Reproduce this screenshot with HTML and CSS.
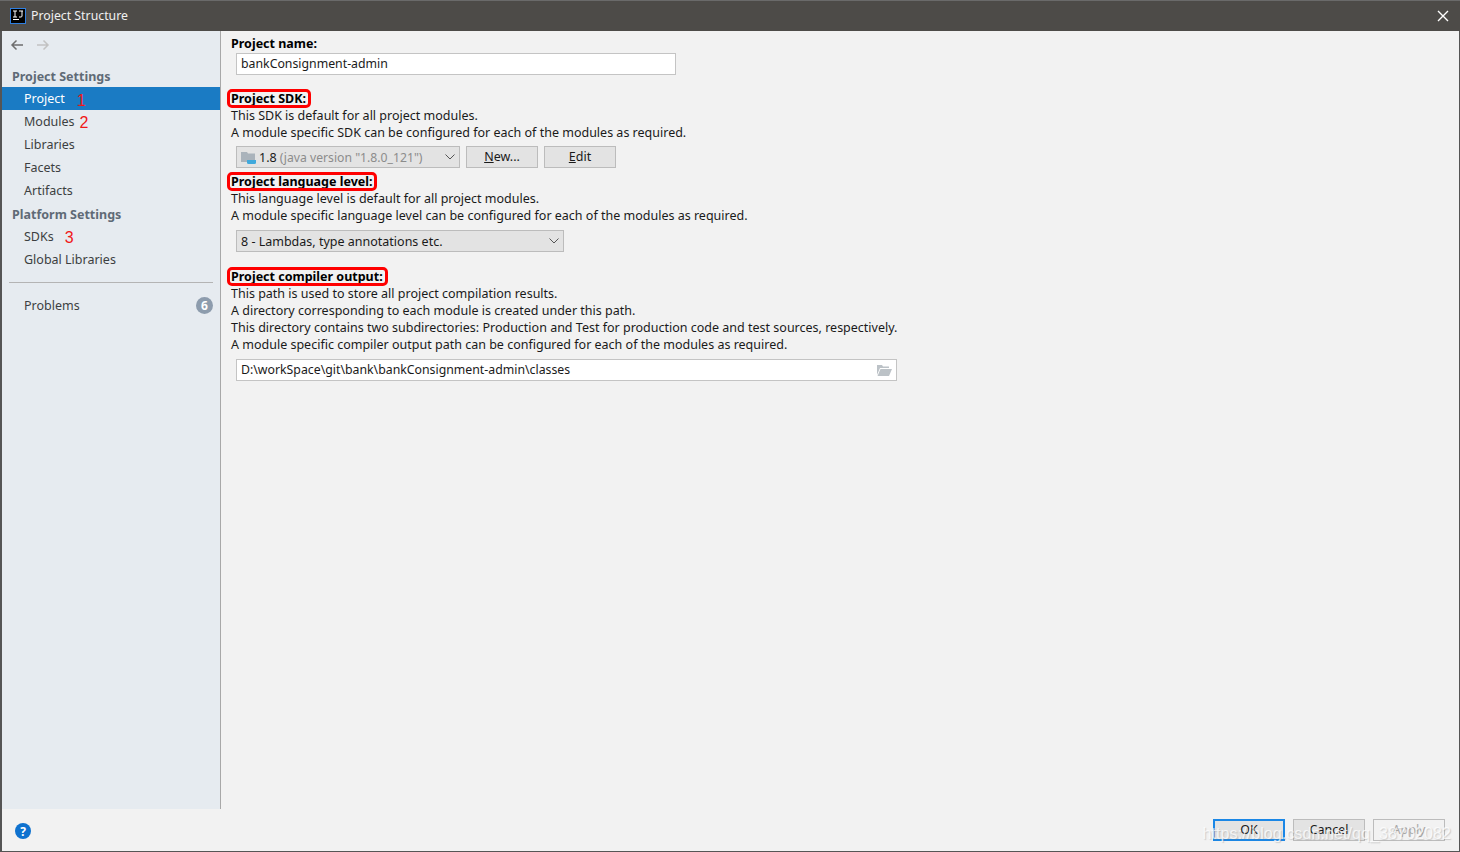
FILE: index.html
```html
<!DOCTYPE html>
<html lang="en">
<head>
<meta charset="utf-8">
<title>Project Structure</title>
<link rel="stylesheet" href="styles.css">
</head>
<body>
<div class="window">
  <header class="titlebar">
    <svg class="app-icon" width="16" height="16" viewBox="0 0 16 16"><rect x="0.5" y="0.5" width="15" height="15" fill="#000" stroke="#2f7fe0"/><rect x="3" y="11" width="6" height="1" fill="#fff"/><path d="M3 3h4M5 3v6M3 9h4M9 3h4M12 3v5q0 1-1 1H9" fill="none" stroke="#fff" stroke-width="1"/></svg>
    <span class="title">Project Structure</span>
    <svg class="close" width="12" height="12" viewBox="0 0 12 12"><path d="M1 1l10 10M11 1L1 11" stroke="#fff" stroke-width="1.4"/></svg>
  </header>
  <div class="body">
    <aside class="sidebar">
      <div class="nav-arrows">
        <svg width="14" height="12" viewBox="0 0 14 12"><path d="M13 6H2M6.500 1.500L2 6l4.500 4.500" fill="none" stroke="#6e6e6e" stroke-width="1.500"/></svg>
        <svg width="14" height="12" viewBox="0 0 14 12"><path d="M1 6h11M7.500 1.500L12 6l-4.500 4.500" fill="none" stroke="#c2c2c2" stroke-width="1.500"/></svg>
      </div>
      <div class="group first">Project Settings</div>
      <div class="item selected">Project<span class="mark m1">1</span></div>
      <div class="item">Modules<span class="mark m2">2</span></div>
      <div class="item">Libraries</div>
      <div class="item">Facets</div>
      <div class="item">Artifacts</div>
      <div class="group">Platform Settings</div>
      <div class="item">SDKs<span class="mark m3">3</span></div>
      <div class="item">Global Libraries</div>
      <div class="divider"></div>
      <div class="item problems">Problems<span class="badge">6</span></div>
    </aside>
    <main class="content">
      <div class="line"><b>Project name:</b></div>
      <div class="field name-field">bankConsignment-admin</div>

      <div class="line section-sdk"><b class="flag">Project SDK:</b></div>
      <div class="line">This SDK is default for all project modules.</div>
      <div class="line">A module specific SDK can be configured for each of the modules as required.</div>
      <div class="controls">
        <div class="combo sdk-combo">
          <svg class="sdk-icon" width="16" height="15" viewBox="0 0 16 15"><path d="M0 2h6l1 1.500h7V12H0z" fill="#aab3bb"/><path d="M6 10h9v2.500q0 1.500-1.500 1.500h-6Q6 14 6 12.500z" fill="#40a9dc"/></svg>
          <span>1.8</span><span class="muted">(java version "1.8.0_121")</span>
          <svg class="chev" width="10" height="6" viewBox="0 0 10 6"><path d="M0.500 0.500L5 5l4.500-4.500" fill="none" stroke="#555"/></svg>
        </div>
        <div class="btn new-btn"><u>N</u>ew...</div>
        <div class="btn new-btn"><u>E</u>dit</div>
      </div>

      <div class="line section-lang"><b class="flag">Project language level:</b></div>
      <div class="line">This language level is default for all project modules.</div>
      <div class="line">A module specific language level can be configured for each of the modules as required.</div>
      <div class="combo lang-combo">
        <span>8 - Lambdas, type annotations etc.</span>
        <svg class="chev" width="10" height="6" viewBox="0 0 10 6"><path d="M0.500 0.500L5 5l4.500-4.500" fill="none" stroke="#555"/></svg>
      </div>

      <div class="line section-out"><b class="flag">Project compiler output:</b></div>
      <div class="line">This path is used to store all project compilation results.</div>
      <div class="line">A directory corresponding to each module is created under this path.</div>
      <div class="line">This directory contains two subdirectories: Production and Test for production code and test sources, respectively.</div>
      <div class="line">A module specific compiler output path can be configured for each of the modules as required.</div>
      <div class="field path-field">
        <span>D:\workSpace\git\bank\bankConsignment-admin\classes</span>
        <svg class="folder" width="15" height="11" viewBox="0 0 15 11"><path d="M0 0h5l1 1.500h6V3H3L0 10z" fill="#bcc2c7"/><path d="M3.500 4H15l-3 7H0.500z" fill="#bcc2c7"/></svg>
      </div>
    </main>
  </div>
  <footer class="footer">
    <span class="help">?</span>
    <div class="actions">
      <div class="btn action default">OK</div>
      <div class="btn action">Cancel</div>
      <div class="btn action disabled">Apply</div>
    </div>
    <span class="watermark">https://blog.csdn.net/qq_38702082</span>
  </footer>
</div>
</body>
</html>
```
FILE: styles.css
```css
* { box-sizing: border-box; }
html, body { margin: 0; height: 100%; background: #fff; }
body { font-family: "Noto Sans", sans-serif; font-size: 12.5px; color: #1a1a1a; overflow: hidden; }

.window {
  width: 1460px; height: 852px;
  display: flex; flex-direction: column;
  border-left: 2px solid #555;
  border-right: 1px solid #555;
  border-bottom: 1px solid #555;
  background: #f2f2f2;
  position: relative;
}

.titlebar {
  height: 31px; margin-left: -2px; margin-right: -1px;
  background: #4d4b48;
  display: flex; align-items: center;
  padding: 0 11px 0 10px;
  border-top: 1px solid #6a6a6a;
  color: #f0f0f0;
}
.app-icon { flex: none; }
.title { margin-left: 5px; padding-bottom: 2px; font-size: 12.3px; }
.close { margin-left: auto; }

.body { flex: 1; display: flex; min-height: 0; }

.sidebar {
  width: 219px;
  background: #e6ebf0;
  border-right: 1px solid #a8a8a8;
  color: #3c3f41;
}
.nav-arrows { height: 26px; display: flex; align-items: center; gap: 12px; padding: 1px 0 0 8px; }
.group { height: 23px; line-height: 26px; padding-left: 10px; font-weight: 700; color: #5f6a76; }
.group.first { height: 30px; line-height: 40px; }
.item { height: 23px; padding: 0 0 1px 22px; display: flex; align-items: center; }
.item.selected { background: #1a7bc4; color: #fff; }
.mark { color: #f01818; font-size: 16px; line-height: 1; font-family: "Liberation Sans", sans-serif; }
.m1 { margin-left: 12px; margin-top: 5px; }
.m2 { margin-left: 5px; margin-top: 4px; }
.m3 { margin-left: 11px; margin-top: 3px; }
.divider { height: 1px; background: #b4b4b4; margin: 11px 7px 11px 7px; }
.problems { padding-right: 7px; }
.badge {
  margin-left: auto; margin-top: 1px; width: 17px; height: 17px; border-radius: 50%;
  background: #8d9cad; color: #fff; font-size: 12px; font-weight: 700;
  display: flex; align-items: center; justify-content: center;
}

.content { flex: 1; padding: 4px 0 0 10px; min-width: 0; }
.line { height: 17px; line-height: 17px; white-space: nowrap; }
.line b { font-weight: 700; color: #000; }
.line .flag {
  display: inline-block; line-height: 13px; padding: 0 2px 0 1px; margin: 0 -2px 0 -1px;
  outline: 3px solid #f00; border-radius: 2px; vertical-align: 0;
}

.field {
  margin-left: 5px; height: 22px; line-height: 20px; font-size: 12.3px;
  background: #fff; border: 1px solid #c4c4c4; padding: 0 4px;
}
.name-field { width: 440px; margin-top: 1px; }
.path-field { width: 661px; margin-top: 6px; display: flex; align-items: center; justify-content: space-between; padding-right: 4px; }

.section-sdk { margin-top: 15px; }
.section-lang { margin-top: 5px; }
.section-out { margin-top: 16px; }

.controls { display: flex; gap: 6px; margin: 5px 0 0 5px; }
.combo {
  height: 22px; background: #e3e3e3; border: 1px solid #bcbcbc;
  display: flex; align-items: center; padding: 0 4px; position: relative;
}
.sdk-combo { width: 224px; }
.sdk-icon { margin-right: 2px; }
.muted { color: #8c8c8c; margin-left: 3px; font-size: 12.2px; }
.chev { position: absolute; right: 4px; top: 7px; }
.lang-combo { width: 328px; margin: 6px 0 0 5px; }

.btn {
  height: 22px; line-height: 19px; text-align: center;
  background: #e3e3e3; border: 1px solid #bcbcbc;
}
.new-btn { width: 72px; }

.footer {
  height: 42px; flex: none; position: relative;
  display: flex; align-items: center; padding: 0 14px 0 13px;
}
.help {
  width: 16px; height: 16px; border-radius: 50%; margin-top: 2px;
  background: #0f72cf; color: #fff; font-weight: 700; font-size: 12px;
  display: flex; align-items: center; justify-content: center;
}
.actions { margin-left: auto; display: flex; gap: 8px; }
.action { width: 72px; }
.default { border: 2px solid #1b87e6; line-height: 17px; }
.disabled { color: #a8a8a8; background: #f2f2f2; }
.watermark {
  position: absolute; right: 8px; top: 12px;
  font-family: "Liberation Sans", sans-serif; font-size: 16.2px; line-height: 24px;
  color: rgba(255,255,255,.75); text-shadow: 1px 1px 1px rgba(120,120,120,.3);
  pointer-events: none; white-space: nowrap;
}
```
